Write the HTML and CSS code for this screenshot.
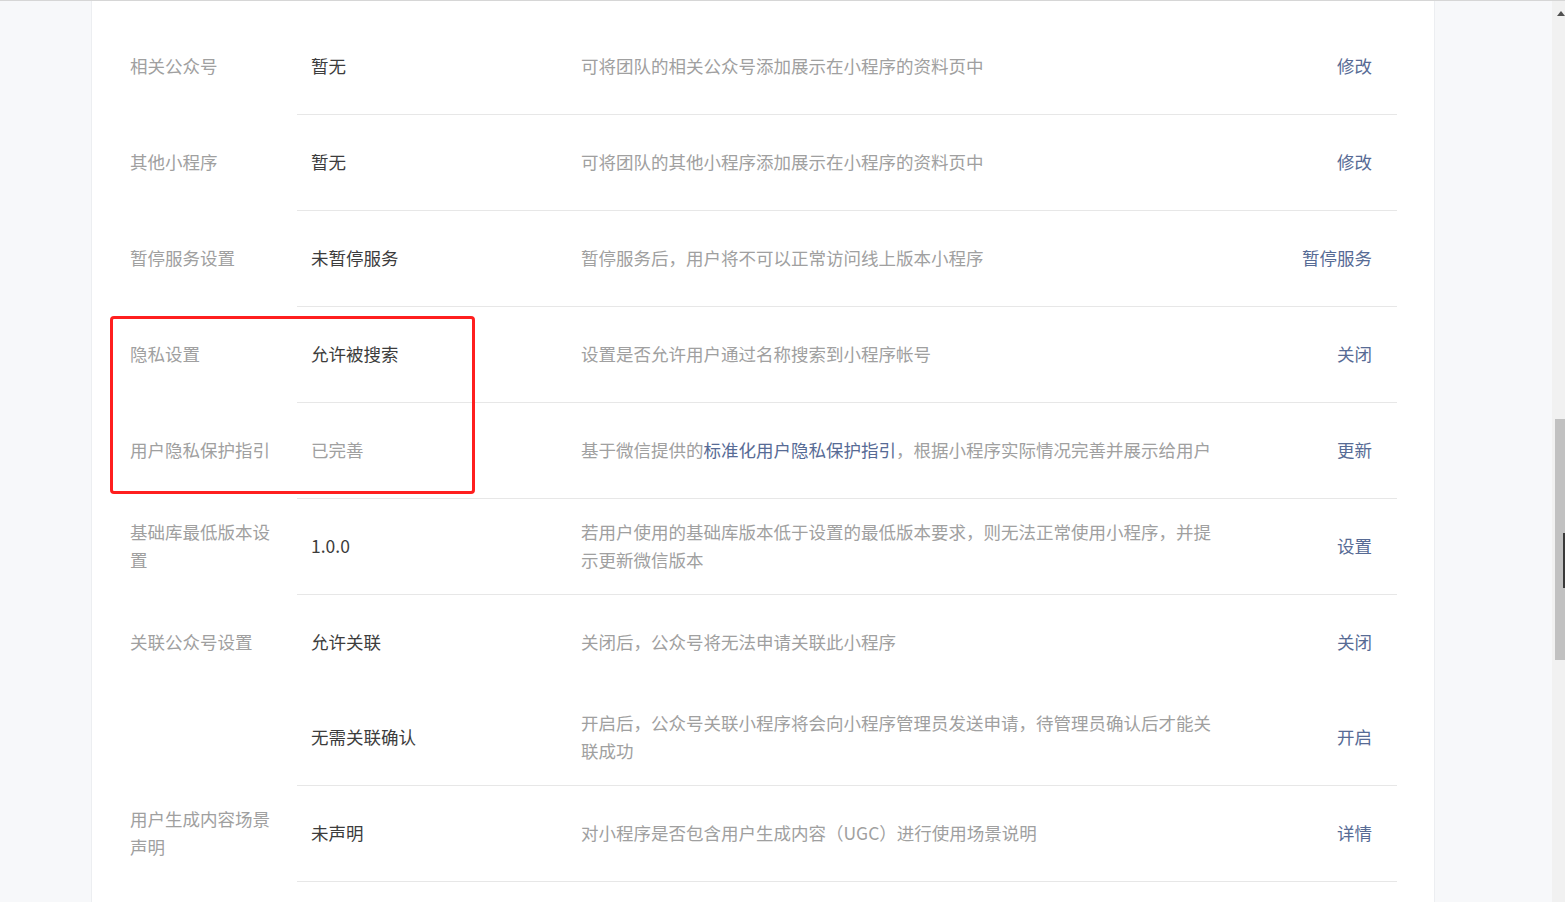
FILE: index.html
```html
<!DOCTYPE html>
<html lang="zh-CN">
<head>
<meta charset="utf-8">
<title>设置</title>
<link rel="stylesheet" href="styles.css">
</head>
<body>
<div class="page">
  <div class="side side-left"></div>
  <main class="card">
    <div class="group">
      <div class="group-label">相关公众号</div>
      <div class="group-items">
        <div class="item"><div class="val">暂无</div><div class="desc">可将团队的相关公众号添加展示在小程序的资料页中</div><div class="act"><a>修改</a></div></div>
      </div>
    </div>
    <div class="group">
      <div class="group-label">其他小程序</div>
      <div class="group-items">
        <div class="item"><div class="val">暂无</div><div class="desc">可将团队的其他小程序添加展示在小程序的资料页中</div><div class="act"><a>修改</a></div></div>
      </div>
    </div>
    <div class="group">
      <div class="group-label">暂停服务设置</div>
      <div class="group-items">
        <div class="item"><div class="val">未暂停服务</div><div class="desc">暂停服务后，用户将不可以正常访问线上版本小程序</div><div class="act"><a>暂停服务</a></div></div>
      </div>
    </div>
    <div class="group">
      <div class="group-label">隐私设置</div>
      <div class="group-items">
        <div class="item"><div class="val">允许被搜索</div><div class="desc">设置是否允许用户通过名称搜索到小程序帐号</div><div class="act"><a>关闭</a></div></div>
      </div>
    </div>
    <div class="group">
      <div class="group-label">用户隐私保护指引</div>
      <div class="group-items">
        <div class="item"><div class="val muted">已完善</div><div class="desc">基于微信提供的<a>标准化用户隐私保护指引</a>，根据小程序实际情况完善并展示给用户</div><div class="act"><a>更新</a></div></div>
      </div>
    </div>
    <div class="group">
      <div class="group-label">基础库最低版本设置</div>
      <div class="group-items">
        <div class="item"><div class="val">1.0.0</div><div class="desc">若用户使用的基础库版本低于设置的最低版本要求，则无法正常使用小程序，并提示更新微信版本</div><div class="act"><a>设置</a></div></div>
      </div>
    </div>
    <div class="group">
      <div class="group-label">关联公众号设置</div>
      <div class="group-items">
        <div class="item no-line"><div class="val">允许关联</div><div class="desc">关闭后，公众号将无法申请关联此小程序</div><div class="act"><a>关闭</a></div></div>
        <div class="item"><div class="val">无需关联确认</div><div class="desc">开启后，公众号关联小程序将会向小程序管理员发送申请，待管理员确认后才能关联成功</div><div class="act"><a>开启</a></div></div>
      </div>
    </div>
    <div class="group">
      <div class="group-label">用户生成内容场景声明</div>
      <div class="group-items">
        <div class="item"><div class="val">未声明</div><div class="desc">对小程序是否包含用户生成内容（UGC）进行使用场景说明</div><div class="act"><a>详情</a></div></div>
      </div>
    </div>
  </main>
  <div class="side side-right"></div>
  <div class="scrollbar">
    <div class="arrow"></div>
    <div class="thumb"></div>
  </div>
</div>
<div class="highlight"></div>
<div class="cursor"></div>
</body>
</html>
```

FILE: styles.css
```css
html, body {
  margin: 0;
  padding: 0;
}
body {
  font-family: "Noto Sans CJK SC", "Microsoft YaHei", "Noto Sans", sans-serif;
  font-size: 17.5px;
  line-height: 28px;
  color: #353535;
  background: #f7f8fa;
  overflow: hidden;
}
.page {
  display: flex;
  height: 901px;
  border-top: 1px solid #d6d6d6;
  background: #f7f8fa;
}
.side-left {
  width: 91px;
  flex-shrink: 0;
}
.card {
  width: 1267px;
  flex-shrink: 0;
  background: #fff;
  border-left: 1px solid #eceef1;
  border-right: 1px solid #eceef1;
  padding: 18px 37px 0 38px;
}
.side-right {
  flex: 1;
}
.scrollbar {
  width: 13px;
  flex-shrink: 0;
  background: #f1f1f1;
  position: relative;
}
.arrow {
  position: absolute;
  left: 5px;
  top: 10px;
  width: 0;
  height: 0;
  border-left: 4px solid transparent;
  border-right: 4px solid transparent;
  border-bottom: 5px solid #505050;
}
.thumb {
  position: absolute;
  left: 3px;
  right: 0;
  top: 418px;
  height: 241px;
  background: #c1c1c1;
}
.group {
  display: flex;
}
.group-label {
  width: 150px;
  margin-right: 17px;
  flex-shrink: 0;
  height: 93px;
  padding-bottom: 2px;
  display: flex;
  align-items: center;
  color: #a0a0a0;
}
.group-items {
  flex: 1;
}
.item {
  display: flex;
  align-items: center;
  height: 93px;
  border-bottom: 1px solid #e7e7e7;
  padding: 0 25px 2px 14px;
}
.item.no-line {
  border-bottom: none;
}
.val {
  width: 270px;
  flex-shrink: 0;
  color: #3c3c3c;
}
.val.muted {
  color: #a0a0a0;
}
.desc {
  width: 640px;
  flex-shrink: 0;
  color: #a0a0a0;
}
.act {
  flex: 1;
  text-align: right;
}
a {
  color: #576b95;
  text-decoration: none;
}
.highlight {
  position: absolute;
  left: 110px;
  top: 316px;
  width: 359px;
  height: 172px;
  border: 3px solid #ff1f1f;
  border-radius: 4px;
}
.cursor {
  position: absolute;
  left: 1563px;
  top: 533px;
  width: 2px;
  height: 55px;
  background: #3a3a3a;
}
```
